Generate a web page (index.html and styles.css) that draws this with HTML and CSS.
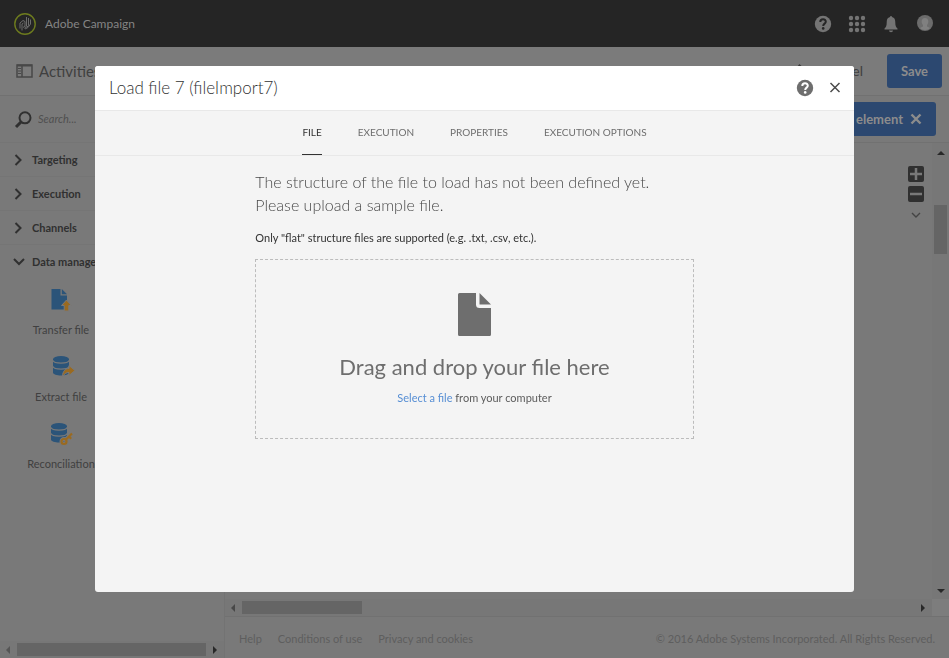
FILE: index.html
```html
<!DOCTYPE html>
<html lang="en">
<head>
<meta charset="utf-8">
<title>Adobe Campaign</title>
<link rel="stylesheet" href="styles.css">
</head>
<body>
<div class="app">
  <header class="topbar">
    <svg class="logo" width="22" height="22" viewBox="0 0 22 22" fill="none"><circle cx="11" cy="11" r="10.2" stroke="#6d7b1e" stroke-width="1.4"/><g stroke="#6c6c6c" stroke-width="1"><path d="M6 15.500v-5.500l3-2.500 2 1v4.500l-2 1.500"/><path d="M8 17.500v-6.500l1.500-1"/><path d="M12.500 4v9l-2 2.500"/><path d="M14.500 5v7.500l-2 2"/><path d="M16.500 6.500v4.500l-2.500 3.500-3 1.500"/></g></svg>
    <span class="brand">Adobe Campaign</span>
    <nav class="tools" aria-label="Tools">
      <button aria-label="Help"><svg width="18" height="18" viewBox="0 0 18 18"><circle cx="9" cy="9" r="8.200" fill="#747474"/><path d="M6.300 7C6.300 3.500 11.800 3.500 11.800 6.700C11.800 8.600 9.200 8.700 9.200 11" fill="none" stroke="#252525" stroke-width="2"/><circle cx="9.200" cy="13.400" r="1.300" fill="#252525"/></svg></button>
      <button aria-label="Apps"><svg width="18" height="18" viewBox="0 0 18 18" fill="#747474"><circle cx="3" cy="3" r="2.200"/><circle cx="9" cy="3" r="2.200"/><circle cx="15" cy="3" r="2.200"/><circle cx="3" cy="9" r="2.200"/><circle cx="9" cy="9" r="2.200"/><circle cx="15" cy="9" r="2.200"/><circle cx="3" cy="15" r="2.200"/><circle cx="9" cy="15" r="2.200"/><circle cx="15" cy="15" r="2.200"/></svg></button>
      <button aria-label="Notifications"><svg width="18" height="18" viewBox="0 0 18 18" fill="#747474"><path d="M8 2a1 1 0 0 1 2 0C12.500 2.500 13.300 4.500 13.300 7.500c0 3.500.7 4.500 2.200 6V14.500h-13V13.500c1.500-1.500 2.200-2.500 2.200-6C4.700 4.500 5.500 2.500 8 2z"/><path d="M7 15.500h4a2 1.800 0 0 1-4 0z"/></svg></button>
      <button aria-label="Account"><svg width="18" height="18" viewBox="0 0 18 18"><circle cx="9" cy="8" r="8" fill="#6c6c6c"/><path d="M9 3c4 0 4 5 2 7v1.500l3 1.500c-2 2.500-8 2.500-10 0l3-1.500v-1.500c-2-2-2-7 2-7z" fill="#808080"/></svg></button>
    </nav>
  </header>
  <div class="toolbar">
    <svg width="17" height="14" viewBox="0 0 17 14"><path d="M1 1h15v12H1zM6 1v12" fill="none" stroke="#484848" stroke-width="1.500"/><path d="M1 1.500h15" stroke="#484848" stroke-width="2"/><path d="M2 4.500h3M2 7h3M2 9.500h3" stroke="#484848"/></svg>
    <h1>Activities</h1>
    <svg class="edit" width="16" height="16" viewBox="0 0 16 16"><path d="M1 15l1-4 8.500-10 3 3L5 14z" fill="#3a3a3a"/></svg>
    <button class="cancel">Cancel</button>
    <button class="save">Save</button>
  </div>
  <div class="workspace">
    <aside class="sidebar">
      <label class="search"><svg width="17" height="17" viewBox="0 0 17 17" fill="none" stroke="#303030"><circle cx="10" cy="6.800" r="5.500" stroke-width="2"/><path d="M6 11L1 16" stroke-width="3"/></svg><input type="search" placeholder="Search..." aria-label="Search"></label>
      <button class="group"><svg width="12" height="12" viewBox="0 0 12 12"><path d="M2.500 1l5 5-5 5"/></svg>Targeting</button>
      <button class="group"><svg width="12" height="12" viewBox="0 0 12 12"><path d="M2.500 1l5 5-5 5"/></svg>Execution</button>
      <button class="group"><svg width="12" height="12" viewBox="0 0 12 12"><path d="M2.500 1l5 5-5 5"/></svg>Channels</button>
      <button class="group"><svg width="12" height="12" viewBox="0 0 12 12"><path d="M1 3l5 5 5-5"/></svg>Data management</button>
      <div class="tiles">
        <div class="tile"><svg width="24" height="24" viewBox="0 0 24 24"><path d="M2.500 1h9v6.500H18v14H2.500z" fill="#2b5479"/><path d="M12.800 1L18 6.200h-5.200z" fill="#2b5479"/><path d="M17.500 12l5 5.500h-2.700V23h-4.600v-5.500h-2.700z" fill="#9a6a20" stroke="#797979"/></svg><span>Transfer file</span></div>
        <div class="tile"><svg width="24" height="24" viewBox="0 0 24 24"><path d="M4 4v13.500c0 4 16 4 16 0V4z" fill="#2b5479"/><ellipse cx="12" cy="4.200" rx="8" ry="3.200" fill="#2b5479"/><path d="M4 5.500c1 3.500 15 3.500 16 0M4 11.500c1 3.500 15 3.500 16 0" fill="none" stroke="#797979" stroke-width="1.200"/><path d="M13.500 21.500c0-5.500 3-8 6.500-8v-3l6 5-6 5v-3c-3 0-4 1-6.500 4z" fill="#9a6a20" stroke="#797979"/></svg><span>Extract file</span></div>
        <div class="tile"><svg width="24" height="24" viewBox="0 0 24 24"><path d="M2 4v13.500c0 4 16 4 16 0V4z" fill="#2b5479"/><ellipse cx="10" cy="4.200" rx="8" ry="3.200" fill="#2b5479"/><path d="M2 5.500c1 3.500 15 3.500 16 0M2 11.500c1 3.500 15 3.500 16 0" fill="none" stroke="#797979" stroke-width="1.200"/><g fill="none" stroke="#797979" stroke-width="4"><circle cx="15" cy="19.500" r="2.500"/><path d="M17 17.500l5.500-5.500"/></g><g fill="none" stroke="#9a6a20" stroke-width="2.200"><circle cx="15" cy="19.500" r="2.500"/><path d="M17 17.500l6-6M20 14.500l2.200 2.200"/></g></svg><span>Reconciliation</span></div>
      </div>
      <div class="hbar"><svg width="6" height="8" viewBox="0 0 6 8"><path d="M5 0v8L1 4z" fill="#555"/></svg><i class="thumb wide"></i><svg width="6" height="8" viewBox="0 0 6 8"><path d="M1 0v8l4-4z" fill="#282828"/></svg></div>
    </aside>
    <main class="main">
      <div class="selection"><button>Selected element<svg width="12" height="12" viewBox="0 0 12 12"><path d="M1.500 1.500l9 9M10.500 1.500l-9 9" stroke="#8c8c8c" stroke-width="2.400"/></svg></button></div>
      <div class="canvas">
        <div class="stage">
          <button aria-label="Zoom in"><svg width="16" height="16" viewBox="0 0 16 16"><rect width="16" height="16" rx="2" fill="#303030"/><path d="M8 2v12M2 8h12" stroke="#797979" stroke-width="2.500"/></svg></button>
          <button aria-label="Zoom out"><svg width="16" height="16" viewBox="0 0 16 16"><rect width="16" height="16" rx="2" fill="#303030"/><path d="M2 8h12" stroke="#797979" stroke-width="2.500"/></svg></button>
          <button aria-label="More"><svg width="16" height="16" viewBox="0 0 16 16"><path d="M4 7l4 4 4-4" fill="none" stroke="#444" stroke-width="1.400"/></svg></button>
        </div>
        <div class="vbar"><svg width="8" height="5" viewBox="0 0 8 5"><path d="M0 5h8L4 1z" fill="#282828"/></svg><i class="vthumb"></i><svg width="8" height="5" viewBox="0 0 8 5"><path d="M0 0h8L4 4z" fill="#282828"/></svg></div>
      </div>
      <div class="hrow"><div class="hbar"><svg width="6" height="8" viewBox="0 0 6 8"><path d="M5 0v8L1 4z" fill="#484848"/></svg><i class="thumb"></i><svg class="end" width="6" height="8" viewBox="0 0 6 8"><path d="M1 0v8l4-4z" fill="#282828"/></svg></div></div>
      <footer class="footer"><a href="#">Help</a><a href="#">Conditions of use</a><a href="#">Privacy and cookies</a><span>© 2016 Adobe Systems Incorporated. All Rights Reserved.</span></footer>
    </main>
  </div>
</div>
<div class="overlay">
  <section class="modal" role="dialog" aria-labelledby="title">
    <header class="modal-head">
      <h2 id="title">Load file 7 (fileImport7)</h2>
      <button aria-label="Help"><svg width="18" height="18" viewBox="0 0 18 18"><circle cx="9" cy="9" r="8.200" fill="#6e6e6e"/><path d="M6.300 7C6.300 3.500 11.800 3.500 11.800 6.700C11.800 8.600 9.200 8.700 9.200 11" fill="none" stroke="#fff" stroke-width="2"/><circle cx="9.200" cy="13.400" r="1.300" fill="#fff"/></svg></button>
      <button aria-label="Close"><svg width="12" height="12" viewBox="0 0 12 12"><path d="M1.500 1l9 9M10.500 1l-9 9" stroke="#4b4b4b" stroke-width="1.500"/></svg></button>
    </header>
    <nav class="tabs" role="tablist">
      <button role="tab" aria-selected="true">FILE</button>
      <button role="tab">EXECUTION</button>
      <button role="tab">PROPERTIES</button>
      <button role="tab">EXECUTION OPTIONS</button>
    </nav>
    <div class="content">
      <p class="lead">The structure of the file to load has not been defined yet.<br>Please upload a sample file.</p>
      <p class="hint">Only "flat" structure files are supported (e.g. .txt, .csv, etc.).</p>
      <div class="drop">
        <svg width="33" height="44" viewBox="0 0 33 44" fill="#6e6e6e"><path d="M1.500 0H18v11.500a3.500 3.500 0 0 0 3.500 3.500H33v26.500a1.500 1.500 0 0 1-1.500 1.500h-30A1.500 1.500 0 0 1 0 41.500v-40A1.500 1.500 0 0 1 1.500 0z"/><path d="M21.500 0L33 11.500H22a.5.5 0 0 1-.5-.5z"/></svg>
        <strong>Drag and drop your file here</strong>
        <span><a href="#">Select a file</a> from your computer</span>
      </div>
    </div>
  </section>
</div>
</body>
</html>
```
FILE: styles.css
```css
* { box-sizing: border-box; }
html, body { height: 100%; margin: 0; }
body { overflow: hidden; background: #797979; color: #303030; font: 12px/16px Lato, "Noto Sans", sans-serif; }
button { border: 0; padding: 0; background: none; color: inherit; font: inherit; cursor: pointer; }
a { text-decoration: none; color: inherit; }
svg { display: block; flex: none; overflow: visible; }
h1, h2, p { margin: 0; font-weight: 400; }

.app { display: flex; flex-direction: column; height: 100vh; }
.topbar { display: flex; align-items: center; flex: none; height: 47px; padding: 0 15px 0 14px; background: #252525; }
.brand { margin-left: 9px; color: #848484; font-size: 12px; }
.tools { display: flex; gap: 16px; margin-left: auto; }

.toolbar { display: flex; align-items: center; flex: none; height: 49px; padding: 0 7px 0 16px; border-bottom: 1px solid #717171; background: #7b7b7b; color: #404040; }
.toolbar h1 { margin-left: 6px; font-size: 15px; }
.edit { margin-left: auto; }
.cancel { margin: 0 24px 0 17px; font-size: 14px; }
.save { width: 55px; height: 34px; border-radius: 3px; background: #2c4870; color: #8c8c8c; font-size: 13px; font-weight: 700; }

.workspace { display: flex; flex: 1; min-height: 0; }
.sidebar { display: flex; flex-direction: column; flex: none; width: 225px; border-right: 1px solid #737373; }
.search { display: flex; align-items: center; gap: 6px; height: 46px; padding-left: 15px; }
.search input { width: 150px; border: 0; padding: 0; background: none; font: italic 11px/16px Lato, sans-serif; outline: 0; }
.search input::placeholder { color: #505050; opacity: 1; }
.group { display: flex; align-items: center; gap: 7px; height: 34px; padding: 0 0 0 13px; border-top: 1px solid #757575; font-size: 11px; font-weight: 700; }
.group path { fill: none; stroke: #303030; stroke-width: 2; }
.tiles { display: flex; flex-direction: column; gap: 17px; padding-top: 10px; color: #404040; font-size: 11px; }
.tile { display: flex; flex-direction: column; align-items: center; gap: 10px; width: 122px; }
.sidebar .hbar { margin-top: auto; }

.hbar { display: flex; align-items: center; gap: 6px; flex: 1; height: 17px; padding: 0 6px 0 5px; background: #777; }
.sidebar .hbar { flex: none; }
.thumb { width: 120px; height: 13px; background: #656565; }
.wide { flex: 1; }
.end { margin-left: auto; }

.main { display: flex; flex-direction: column; flex: 1; min-width: 0; }
.selection { display: flex; justify-content: flex-end; padding: 6px 13px; border-bottom: 1px solid #717171; }
.selection button { display: flex; align-items: center; gap: 7px; height: 34px; padding: 0 14px; border-radius: 3px; background: #2c4870; color: #8c8c8c; font-size: 13px; font-weight: 700; }
.canvas { display: flex; flex: 1; min-height: 0; }
.stage { display: flex; flex: 1; flex-direction: column; align-items: flex-end; gap: 4px; padding: 23px 8px 0; }
.vbar { display: flex; flex-direction: column; align-items: center; width: 17px; padding: 7px 0 5px; background: #777; }
.vthumb { width: 13px; height: 49px; margin: 50px 0 auto; background: #656565; }
.hrow { display: flex; flex: none; padding-right: 17px; background: #7d7d7d; }
.footer { display: flex; align-items: center; flex: none; gap: 16px; height: 42px; padding: 2px 14px 0; border-top: 1px solid #717171; color: #5e5e5e; font-size: 11px; }
.footer span { margin-left: auto; }

.overlay { position: fixed; inset: 0; display: grid; place-items: center; }
.modal { display: flex; flex-direction: column; width: 80%; height: 80%; overflow: hidden; border-radius: 3px; background: #f4f4f4; }
.modal-head { display: flex; align-items: center; gap: 15px; height: 45px; padding: 0 13px 0 14px; border-bottom: 1px solid #e8e8e8; background: #fff; color: #323232; }
.modal h2 { margin-right: auto; font-size: 17px; font-weight: 300; }
.tabs { display: flex; justify-content: center; gap: 36px; height: 45px; border-bottom: 1px solid #e8e8e8; color: #6e6e6e; font-size: 10px; }
.tabs button { border-bottom: 1px solid transparent; }
.tabs [aria-selected="true"] { border-bottom-color: #323232; color: #323232; }
.content { width: 58%; margin: 0 auto; padding: 14px 1px 0; }
.lead { color: #484848; font-size: 16px; font-weight: 300; line-height: 23px; white-space: nowrap; }
.hint { margin: 14px 0 13px; color: #323232; font-size: 11px; }
.drop { display: flex; flex-direction: column; align-items: center; height: 180px; padding-top: 33px; border: 1px dashed #bcbcbc; color: #6e6e6e; }
.drop strong { margin: 14px 0 7px; font-size: 22px; font-weight: 400; line-height: 32px; }
.drop span { color: #5c5c5c; font-size: 11px; }
.drop a { color: #568ed4; }
```
